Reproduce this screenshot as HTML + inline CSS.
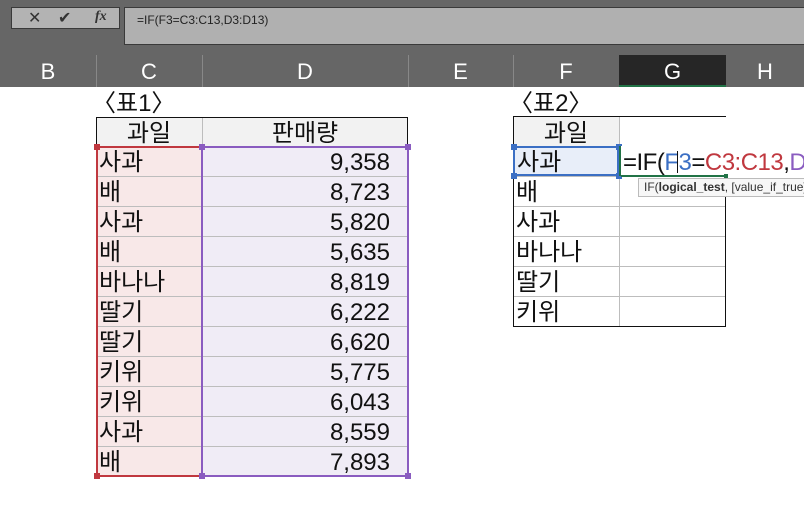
<!DOCTYPE html>
<html><head><meta charset="utf-8">
<style>
*{margin:0;padding:0;box-sizing:border-box}
body{width:804px;height:523px;overflow:hidden;background:#fff;position:relative;font-family:"Liberation Sans","Noto Sans CJK KR","NanumGothic",sans-serif}
.a{position:absolute}
.top{left:0;top:0;width:804px;height:87px;background:#666}
.btns{left:11px;top:7px;width:109px;height:22px;background:#b3b3b3;border:1px solid #3a3a3a}
.fin{left:124px;top:7px;width:690px;height:38px;background:#b0b0b0;border:1px solid #3a3a3a;font-size:12px;color:#222;padding:5px 0 0 12px}
.ch{top:55px;height:32px;color:#fff;font-size:22px;text-align:center;line-height:34px}
.sep{top:55px;width:1px;height:32px;background:#888}
.k{font-size:24px;color:#111;line-height:30px;margin-top:2px}
.hl{height:1px;background:#bdbdbd}
.vl{width:1px;background:#bdbdbd}
.sq{width:6px;height:6px}
</style></head><body>
<div class="a top"></div>
<div class="a btns">
 <span class="a" style="left:16px;top:0px;font-size:16px;color:#333">✕</span>
 <span class="a" style="left:46px;top:0px;font-size:16px;color:#333">✔</span>
 <span class="a" style="left:83px;top:1px;font-size:14px;color:#333;font-family:'Liberation Serif',serif;font-style:italic;font-weight:bold">fx</span>
</div>
<div class="a fin">=IF(F3=C3:C13,D3:D13)</div>
<div class="a ch" style="left:0;width:96px">B</div>
<div class="a sep" style="left:96px"></div>
<div class="a ch" style="left:96px;width:106px">C</div>
<div class="a sep" style="left:202px"></div>
<div class="a ch" style="left:202px;width:206px">D</div>
<div class="a sep" style="left:408px"></div>
<div class="a ch" style="left:408px;width:105px">E</div>
<div class="a sep" style="left:513px"></div>
<div class="a ch" style="left:513px;width:106px">F</div>
<div class="a ch" style="left:619px;width:107px;background:#262626;border-bottom:2px solid #217346">G</div>
<div class="a ch" style="left:726px;width:78px">H</div>

<div class="a k" style="left:92px;top:87px">〈표1〉</div>
<div class="a" style="left:96px;top:117px;width:312px;height:29px;background:#f2f2f2;border:1px solid #111;border-bottom:none"></div>
<div class="a vl" style="left:202px;top:118px;height:28px"></div>
<div class="a k" style="left:96px;top:117px;width:106px;text-align:center">과일</div>
<div class="a k" style="left:202px;top:117px;width:206px;text-align:center">판매량</div>
<div class="a" style="left:96px;top:146px;width:106px;height:330px;background:#f8e8e8"></div>
<div class="a" style="left:202px;top:146px;width:206px;height:330px;background:#f0ecf6"></div>
<div id="t1"></div>
<div class="a" style="left:96px;top:146px;width:2px;height:331px;background:#c0383f"></div>
<div class="a" style="left:96px;top:146px;width:106px;height:2px;background:#c0383f"></div>
<div class="a" style="left:96px;top:475px;width:106px;height:2px;background:#c0383f"></div>
<div class="a" style="left:202px;top:146px;width:206px;height:2px;background:#8a5cc0"></div>
<div class="a" style="left:202px;top:475px;width:206px;height:2px;background:#8a5cc0"></div>
<div class="a" style="left:407px;top:146px;width:2px;height:331px;background:#8a5cc0"></div>
<div class="a" style="left:201px;top:146px;width:2px;height:331px;background:#8a5cc0"></div>
<div class="a sq" style="left:94px;top:144px;background:#c0383f"></div>
<div class="a sq" style="left:94px;top:473px;background:#c0383f"></div>
<div class="a sq" style="left:199px;top:144px;background:#8a5cc0"></div>
<div class="a sq" style="left:199px;top:473px;background:#8a5cc0"></div>
<div class="a sq" style="left:405px;top:144px;background:#8a5cc0"></div>
<div class="a sq" style="left:405px;top:473px;background:#8a5cc0"></div>

<div class="a k" style="left:509px;top:87px">〈표2〉</div>
<div class="a" style="left:513px;top:116px;width:213px;height:1px;background:#111"></div>
<div class="a" style="left:513px;top:117px;width:106px;height:29px;background:#f2f2f2"></div>
<div class="a k" style="left:513px;top:117px;width:106px;text-align:center">과일</div>
<div id="t2"></div>
<div class="a" style="left:513px;top:117px;width:1px;height:210px;background:#111"></div>
<div class="a" style="left:725px;top:146px;width:1px;height:181px;background:#111"></div>
<div class="a" style="left:513px;top:326px;width:213px;height:1px;background:#111"></div>
<div class="a vl" style="left:619px;top:117px;height:209px"></div>
<div class="a" style="left:513px;top:146px;width:106px;height:30px;background:#e8eef9;border:2px solid #3b6fc4"></div>
<div class="a k" style="left:517px;top:146px">사과</div>
<div class="a sq" style="left:511px;top:144px;background:#3b6fc4"></div>
<div class="a sq" style="left:616px;top:144px;background:#3b6fc4"></div>
<div class="a sq" style="left:511px;top:173px;background:#3b6fc4"></div>
<div class="a sq" style="left:616px;top:173px;background:#3b6fc4"></div>
<div class="a" style="left:619px;top:146px;width:185px;height:30px;background:#fff"></div>
<div class="a" style="left:619px;top:146px;width:2px;height:30px;background:#217346"></div>
<div class="a" style="left:621px;top:175px;width:106px;height:2px;background:#217346"></div>
<div class="a" style="left:724px;top:174px;width:4px;height:4px;background:#217346"></div>
<div class="a k" style="left:623px;top:146px;white-space:nowrap;letter-spacing:-0.5px">=IF(<span style="color:#3b6fc4">F3</span>=<span style="color:#c0383f">C3:C13</span>,<span style="color:#8a5cc0">D</span></div>
<div class="a" style="left:677px;top:151px;width:1px;height:22px;background:#111"></div>
<div class="a" style="left:638px;top:178px;width:170px;height:19px;background:#f7f7f7;border:1px solid #bbb;font-size:12px;color:#333;padding:1px 0 0 5px;white-space:nowrap">IF(<b>logical_test</b>, [value_if_true],</div>

<script>
var f=["사과","배","사과","배","바나나","딸기","딸기","키위","키위","사과","배"];
var n=["9,358","8,723","5,820","5,635","8,819","6,222","6,620","5,775","6,043","8,559","7,893"];
var h="";
for(var i=0;i<11;i++){var y=146+i*30;
 if(i>0)h+='<div class="a hl" style="left:96px;top:'+y+'px;width:312px"></div>';
 h+='<div class="a k" style="left:99px;top:'+(y)+'px">'+f[i]+'</div>';
 h+='<div class="a k" style="left:202px;top:'+(y)+'px;width:188px;text-align:right">'+n[i]+'</div>';}
document.getElementById("t1").outerHTML=h;
var g=["사과","배","사과","바나나","딸기","키위"];h="";
for(var i=0;i<6;i++){var y=146+i*30;
 h+='<div class="a hl" style="left:513px;top:'+y+'px;width:213px"></div>';
 if(i>0)h+='<div class="a k" style="left:516px;top:'+(y)+'px">'+g[i]+'</div>';}
document.getElementById("t2").outerHTML=h;
</script>
</body></html>
